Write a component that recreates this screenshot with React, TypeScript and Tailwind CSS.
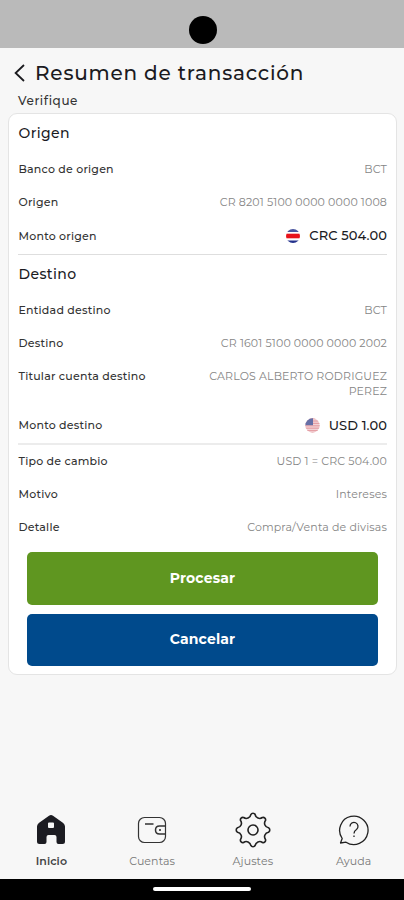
import type { ReactNode } from "react";

function CostaRicaFlag() {
  return (
    <svg width="14" height="14" viewBox="0 0 14 14">
      <clipPath id="cr">
        <circle cx="7" cy="7" r="7" />
      </clipPath>
      <g clipPath="url(#cr)">
        <rect width="14" height="14" fill="#fff" />
        <rect width="14" height="3" fill="#4a569f" />
        <rect y="4.7" width="14" height="4.6" fill="#e8131b" />
        <rect y="11.5" width="14" height="2.5" fill="#23318c" />
      </g>
    </svg>
  );
}

function UsaFlag() {
  return (
    <svg width="15" height="15" viewBox="0 0 15 15">
      <clipPath id="us">
        <circle cx="7.5" cy="7.5" r="7.2" />
      </clipPath>
      <g clipPath="url(#us)">
        <rect width="15" height="15" fill="#f3d3d6" />
        {[0, 2.4, 4.8, 7.2, 9.6, 12, 14.4].map((y) => (
          <rect key={y} y={y} width="15" height="1.2" fill="#e5a0a6" />
        ))}
        <rect width="8" height="7.2" fill="#666fa6" />
      </g>
    </svg>
  );
}

function Label({ children }: { children: ReactNode }) {
  return (
    <span className="pl-[0.5px] text-[11px] leading-[15px] font-medium tracking-[0.22px] whitespace-nowrap text-[#333]">
      {children}
    </span>
  );
}

function Value({ className = "", children }: { className?: string; children: ReactNode }) {
  return (
    <span className={`text-right text-[11px] leading-[15px] font-normal tracking-[0.15px] text-[#858585] ${className}`}>
      {children}
    </span>
  );
}

function Row({ label, className = "h-[33px]", children }: {
  label: string;
  className?: string;
  children: ReactNode;
}) {
  return (
    <div className={`flex items-center justify-between ${className}`}>
      <Label>{label}</Label>
      {children}
    </div>
  );
}

function Amount({ flag, children }: { flag: ReactNode; children: ReactNode }) {
  return (
    <span className="flex items-center gap-[9px] text-[13px] font-medium tracking-[0.1px]">
      {flag}
      {children}
    </span>
  );
}

function NavItem({ label, labelClass, children }: { label: string; labelClass: string; children: ReactNode }) {
  return (
    <div className="flex flex-1 flex-col items-center">
      <div className="flex h-9 items-center justify-center">{children}</div>
      <span className={`mt-[5px] text-[11px] leading-4 tracking-[0.1px] ${labelClass}`}>{label}</span>
    </div>
  );
}

export default function App() {
  return (
    <div className="flex h-[900px] w-[404px] flex-col overflow-hidden bg-[#f7f7f7] font-['Montserrat','Inter',sans-serif] text-[#1b1b1f]">
      {/* Status bar with camera cutout */}
      <div className="flex h-12 shrink-0 justify-center bg-[#bababa] pt-4 pl-px">
        <div className="h-7 w-7 rounded-full bg-black" />
      </div>

      {/* Header */}
      <div className="flex h-[49px] shrink-0 items-center pl-[14px]">
        <svg width="11" height="18" viewBox="0 0 11 18" fill="none" stroke="#1b1b1f" strokeWidth="1.8">
          <path d="M10 1 1.6 9 10 17" />
        </svg>
        <h1 className="ml-[10px] whitespace-nowrap text-[20px] leading-6 font-medium tracking-[0.8px]">
          Resumen de transacción
        </h1>
      </div>
      <p className="h-[16px] shrink-0 pl-[18px] text-[12px] leading-[7px] font-medium tracking-[0.6px] text-[#333]">
        Verifique
      </p>

      {/* Card */}
      <div className="mr-[7px] ml-2 h-[562px] shrink-0 rounded-[9px] border border-[#e4e4e4] bg-white px-[9px]">
        <h2 className="h-[39px] pl-[0.5px] text-[14px] leading-[39px] font-medium tracking-[0.4px]">Origen</h2>
        <Row label="Banco de origen">
          <Value>BCT</Value>
        </Row>
        <Row label="Origen">
          <Value>CR 8201 5100 0000 0000 1008</Value>
        </Row>
        <Row label="Monto origen" className="h-[34px]">
          <Amount flag={<CostaRicaFlag />}>CRC 504.00</Amount>
        </Row>
        <div className="mt-px h-px bg-[#dedede]" />

        <h2 className="h-[39px] pl-[0.5px] text-[14px] leading-[39px] font-medium tracking-[0.4px]">Destino</h2>
        <Row label="Entidad destino">
          <Value>BCT</Value>
        </Row>
        <Row label="Destino">
          <Value>CR 1601 5100 0000 0000 2002</Value>
        </Row>
        <div className="flex h-[49px] justify-between pt-[9px]">
          <Label>Titular cuenta destino</Label>
          <Value className="w-[190px]">CARLOS ALBERTO RODRIGUEZ PEREZ</Value>
        </div>
        <Row label="Monto destino">
          <Amount flag={<UsaFlag />}>USD 1.00</Amount>
        </Row>
        <div className="mt-px h-[2px] bg-[#ececec]" />

        <Row label="Tipo de cambio">
          <Value>USD 1 = CRC 504.00</Value>
        </Row>
        <Row label="Motivo">
          <Value>Intereses</Value>
        </Row>
        <Row label="Detalle">
          <Value>Compra/Venta de divisas</Value>
        </Row>

        {/* Actions */}
        <div className="flex flex-col gap-[9px] px-[9px] pt-2 text-[14px] font-bold tracking-[0.15px] text-white">
          <button className="h-[52.500px] rounded-[5px] bg-[#5f9620]">Procesar</button>
          <button className="h-[52.500px] rounded-[5px] bg-[#004a8c]">Cancelar</button>
        </div>
      </div>

      {/* Bottom navigation */}
      <nav className="mt-auto flex h-[67px] shrink-0 pl-px text-[#777]">
        <NavItem label="Inicio" labelClass="font-semibold text-[#444]">
          <svg width="30" height="32" viewBox="0 0 30 32">
            <path
              fill="#1c1c22"
              fillRule="evenodd"
              d="M13 1.8Q15 .4 17 1.8L27.2 9Q29 10.5 29 12.5V27.5Q29 30 26.5 30H22.5Q20.5 30 20.5 28V23Q20.5 21 18.5 21H12.5Q10.5 21 10.5 23V28Q10.5 30 8.5 30H3.5Q1 30 1 27.5V12.5Q1 10.5 2.8 9ZM13 8.5Q12 8.5 12 9.5V13Q12 14 13 14H17Q18 14 18 13V9.5Q18 8.5 17 8.5Z"
            />
          </svg>
        </NavItem>
        <NavItem label="Cuentas" labelClass="">
          <svg width="30" height="28" viewBox="0 0 30 28" fill="none" stroke="#333" strokeWidth="1.2">
            <rect x="1.5" y="1.5" width="27" height="25" rx="6" />
            <path d="M28.5 10H22.5Q18.5 10 18.5 14T22.5 18H28.5M8 8H16.5" strokeWidth="1.5" />
            <circle cx="23" cy="14" r=".5" />
          </svg>
        </NavItem>
        <NavItem label="Ajustes" labelClass="">
          <svg width="36" height="36" viewBox="-1 -1 38 38" fill="none" stroke="#222" strokeWidth="1.7">
            <path d="M34.34 15.7A2.6 2.6 0 0 1 34.34 20.3A4.8 4.8 0 0 0 31.18 27.93A2.6 2.6 0 0 1 27.93 31.18A4.8 4.8 0 0 0 20.3 34.34A2.6 2.6 0 0 1 15.7 34.34A4.8 4.8 0 0 0 8.07 31.18A2.6 2.6 0 0 1 4.82 27.93A4.8 4.8 0 0 0 1.66 20.3A2.6 2.6 0 0 1 1.66 15.7A4.8 4.8 0 0 0 4.82 8.07A2.6 2.6 0 0 1 8.07 4.82A4.8 4.8 0 0 0 15.7 1.66A2.6 2.6 0 0 1 20.3 1.66A4.8 4.8 0 0 0 27.93 4.82A2.6 2.6 0 0 1 31.18 8.07A4.8 4.8 0 0 0 34.34 15.7Z" />
            <circle cx="18" cy="18" r="5.3" />
          </svg>
        </NavItem>
        <NavItem label="Ayuda" labelClass="">
          <svg className="ml-px" width="32" height="32" viewBox="0 0 32 32" fill="none" stroke="#222" strokeWidth="1.3" strokeLinejoin="round">
            <path d="M4.2 24.5A14.2 14.2 0 1 1 8 28.2L2.5 29Z" />
            <path d="M12 12.5A4 4 0 1 1 18.5 15.5Q16 17 16 19.5M16 21.5V23" />
          </svg>
        </NavItem>
      </nav>

      {/* System gesture bar */}
      <div className="flex h-[21px] shrink-0 justify-center bg-black pt-[8px]">
        <div className="h-[4px] w-[98px] rounded-full bg-white" />
      </div>
    </div>
  );
}
